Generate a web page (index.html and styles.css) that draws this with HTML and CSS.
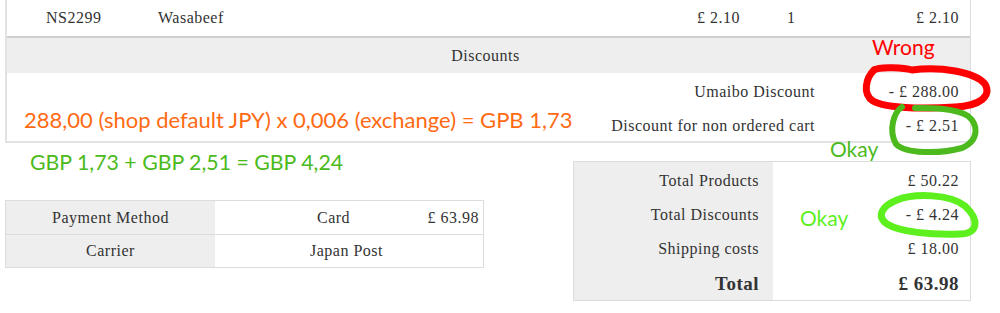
FILE: index.html
```html
<!DOCTYPE html>
<html>
<head>
<meta charset="utf-8">
<link rel="stylesheet" href="styles.css">
</head>
<body>
<div class="page">
  <div class="order">
    <div class="prod-row">
      <div class="c-code">NS2299</div>
      <div class="c-name">Wasabeef</div>
      <div class="c-price">£ 2.10</div>
      <div class="c-qty">1</div>
      <div class="c-total">£ 2.10</div>
    </div>
    <div class="disc-head">Discounts</div>
    <div class="disc-row">
      <div class="d-label">Umaibo Discount</div>
      <div class="d-value">- £ 288.00</div>
    </div>
    <div class="disc-row">
      <div class="d-label">Discount for non ordered cart</div>
      <div class="d-value">- £ 2.51</div>
    </div>
  </div>

  <div class="bottom">
    <div class="pay">
      <div class="pay-row">
        <div class="pay-label">Payment Method</div>
        <div class="pay-val"><span class="pay-name">Card</span><span class="pay-amt">£ 63.98</span></div>
      </div>
      <div class="pay-row">
        <div class="pay-label">Carrier</div>
        <div class="pay-val"><span class="pay-name carrier">Japan Post</span></div>
      </div>
    </div>
    <div class="totals">
      <div class="t-row"><div class="t-label">Total Products</div><div class="t-val">£ 50.22</div></div>
      <div class="t-row"><div class="t-label">Total Discounts</div><div class="t-val">- £ 4.24</div></div>
      <div class="t-row"><div class="t-label">Shipping costs</div><div class="t-val">£ 18.00</div></div>
      <div class="t-row t-grand"><div class="t-label">Total</div><div class="t-val">£ 63.98</div></div>
    </div>
  </div>

  <div class="note note-orange">288,00 (shop default JPY) x 0,006 (exchange) = GPB 1,73</div>
  <div class="note note-green">GBP 1,73 + GBP 2,51 = GBP 4,24</div>
  <div class="note note-wrong">Wrong</div>
  <div class="note note-okay1">Okay</div>
  <div class="note note-okay2">Okay</div>

  <svg class="marks" width="1000" height="313" viewBox="0 0 1000 313">
    <path d="M874 70 C 880 66, 905 68, 912 70 C 940 66, 975 72, 985 84 C 992 96, 980 106, 955 107 C 920 109, 885 108, 873 101 C 862 94, 866 78, 874 70" fill="none" stroke="#f00" stroke-width="7" stroke-linecap="round"/>
    <path d="M902 107 C 894 112, 888 130, 896 144 C 905 154, 940 154, 962 148 C 980 140, 978 124, 968 116 C 955 108, 932 108, 915 108" fill="none" stroke="#4cba1c" stroke-width="6" stroke-linecap="round"/>
    <path d="M897 200 C 915 193, 950 194, 965 206 C 980 220, 978 234, 960 234 C 930 235, 900 232, 887 224 C 876 216, 882 206, 897 200" fill="none" stroke="#5ef01e" stroke-width="7" stroke-linecap="round"/>
  </svg>
</div>
</body>
</html>
```

FILE: styles.css
```css
* { box-sizing: border-box; }
html, body { margin: 0; padding: 0; background: #fff; }
.page {
  position: relative;
  width: 1000px;
  height: 313px;
  overflow: hidden;
  font-family: "Liberation Serif", "DejaVu Serif", serif;
  font-size: 16px;
  letter-spacing: 0.5px;
  color: #333;
}
.order {
  margin-left: 5px;
  width: 966px;
  border-left: 2px solid #e2e2e2;
  border-right: 1px solid #dcdcdc;
  border-bottom: 2px solid #e2e2e2;
}
.prod-row {
  display: flex;
  align-items: center;
  height: 38px;
  border-bottom: 2px solid #cfcfcf;
}
.c-code { width: 151px; padding-left: 39px; flex: none; }
.c-name { flex: 1; }
.c-price { width: 90px; flex: none; }
.c-qty { width: 113px; flex: none; }
.c-total { width: 70px; flex: none; text-align: right; padding-right: 11px; }
.disc-head {
  height: 35px;
  line-height: 35px;
  background: #eeeeee;
  text-align: center;
  padding-right: 6px;
}
.disc-row {
  display: flex;
  align-items: center;
  height: 34px;
  padding-top: 4px;
}
.d-label { width: 808px; flex: none; text-align: right; }
.d-value { flex: 1; text-align: right; padding-right: 11px; }

.bottom {
  display: flex;
  align-items: flex-start;
  margin-top: 18px;
}
.pay {
  margin-left: 5px;
  margin-top: 39px;
  width: 479px;
  flex: none;
  border: 1px solid #dcdcdc;
}
.pay-row {
  display: flex;
  height: 33px;
  align-items: stretch;
}
.pay-row + .pay-row { border-top: 1px solid #dcdcdc; }
.pay-label {
  width: 209px;
  flex: none;
  background: #eeeeee;
  display: flex;
  align-items: center;
  justify-content: center;
}
.pay-val {
  flex: 1;
  display: flex;
  align-items: center;
  white-space: nowrap;
}
.pay-name { padding-left: 102px; }
.pay-name.carrier { padding-left: 95px; }
.pay-amt { flex: 1; text-align: right; padding-right: 4px; }

.totals {
  margin-left: 89px;
  width: 398px;
  flex: none;
  border: 1px solid #dcdcdc;
}
.t-row {
  display: flex;
  height: 34px;
  align-items: stretch;
  padding-top: 3px;
}
.t-label {
  width: 199px;
  flex: none;
  background: #eeeeee;
  padding-right: 14px;
  display: flex;
  align-items: center;
  justify-content: flex-end;
}
.t-row .t-label { margin-top: -3px; padding-top: 3px; }
.t-val {
  flex: 1;
  display: flex;
  align-items: center;
  justify-content: flex-end;
  padding-right: 11px;
}
.t-grand { height: 36px; font-weight: bold; font-size: 19px; }

.note {
  position: absolute;
  font-family: "Lato", "Open Sans", sans-serif;
  letter-spacing: 0;
  white-space: nowrap;
  line-height: 1;
}
.note-orange { left: 24px; top: 109px; font-size: 22px; color: #ff6a13; }
.note-green { left: 30px; top: 152px; font-size: 21.3px; color: #4cba1c; }
.note-wrong { left: 872px; top: 36px; font-size: 21px; color: #ff0000; }
.note-okay1 { left: 830px; top: 138px; font-size: 21px; color: #4cba1c; }
.note-okay2 { left: 800px; top: 207px; font-size: 21px; color: #5ef01e; }
.marks { position: absolute; left: 0; top: 0; pointer-events: none; }
```
